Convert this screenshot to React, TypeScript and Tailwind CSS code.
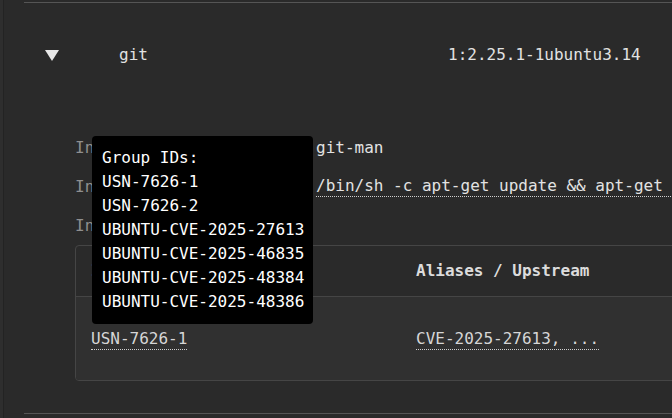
import React from 'react';

const mono = "font-['DejaVu_Sans_Mono',monospace]";

const details = [
    { label: 'Introduced by', value: 'git-man', dotted: false },
    { label: 'Introduced in layer', value: '/bin/sh -c apt-get update && apt-get install -y git curl', dotted: true },
    { label: 'Insights', value: '', dotted: false },
];

const groupIds = [
    'USN-7626-1',
    'USN-7626-2',
    'UBUNTU-CVE-2025-27613',
    'UBUNTU-CVE-2025-46835',
    'UBUNTU-CVE-2025-48384',
    'UBUNTU-CVE-2025-48386',
];

export default function App() {
    return (
        <div className={`relative w-[672px] h-[418px] overflow-hidden bg-[#2a2a2a] text-[16px] leading-[24px] text-[#e2e2e2] flex ${mono}`}>
            {/* left gutter */}
            <div className="w-[4px] shrink-0 bg-[#2e2e2e] border-r border-[#232323]" />

            <div className="flex-1 pl-[20px] pt-[2px]">
                <div className="border-t border-[#555] border-b h-[412px] flex flex-col">
                    {/* package summary row */}
                    <div className="h-[104px] shrink-0 grid grid-cols-[95px_329px_1fr] items-center">
                        <div className="pl-[21px]">
                            <svg width="14" height="11" viewBox="0 0 14 11" className="mt-[1px]">
                                <polygon points="0,0 14,0 7,11" fill="#e8e8e8" />
                            </svg>
                        </div>
                        <span>git</span>
                        <span className="whitespace-nowrap">1:2.25.1-1ubuntu3.14</span>
                    </div>

                    {/* expanded details */}
                    <div className="mt-[21px] pl-[51px]">
                        {details.map((d) => (
                            <div key={d.label} className="h-[39px] grid grid-cols-[241px_1fr] items-center whitespace-nowrap">
                                <span className="text-[#8f8f8f]">{d.label}</span>
                                {d.value && (
                                    <span className={d.dotted ? 'border-b border-dotted border-[#cfcfcf] leading-[20px]' : ''}>{d.value}</span>
                                )}
                            </div>
                        ))}

                        <div className="w-[700px] border border-[#454545] rounded-[4px] overflow-hidden">
                            <div className="h-[51px] grid grid-cols-[340px_1fr] items-center font-bold text-[#dcdcdc] border-b border-[#454545]">
                                <span className="pl-[15px]">ID</span>
                                <span>Aliases / Upstream</span>
                            </div>
                            <div className="h-[83px] grid grid-cols-[340px_1fr] items-center bg-[#303030] text-[#d6d6d6]">
                                <span className="pl-[15px]">
                                    <span className="border-b border-dotted border-[#cfcfcf] leading-[20px] inline-block">USN-7626-1</span>
                                </span>
                                <span>
                                    <span className="border-b border-dotted border-[#cfcfcf] leading-[20px] inline-block">CVE-2025-27613, ...</span>
                                </span>
                            </div>
                        </div>
                    </div>
                </div>
            </div>

            {/* tooltip */}
            <div className="absolute left-[92px] top-[136px] w-[221px] bg-black text-white rounded-[4px] px-[10px] py-[10px] whitespace-nowrap">
                <div>Group IDs:</div>
                {groupIds.map((id) => (
                    <div key={id}>{id}</div>
                ))}
            </div>
        </div>
    );
}
